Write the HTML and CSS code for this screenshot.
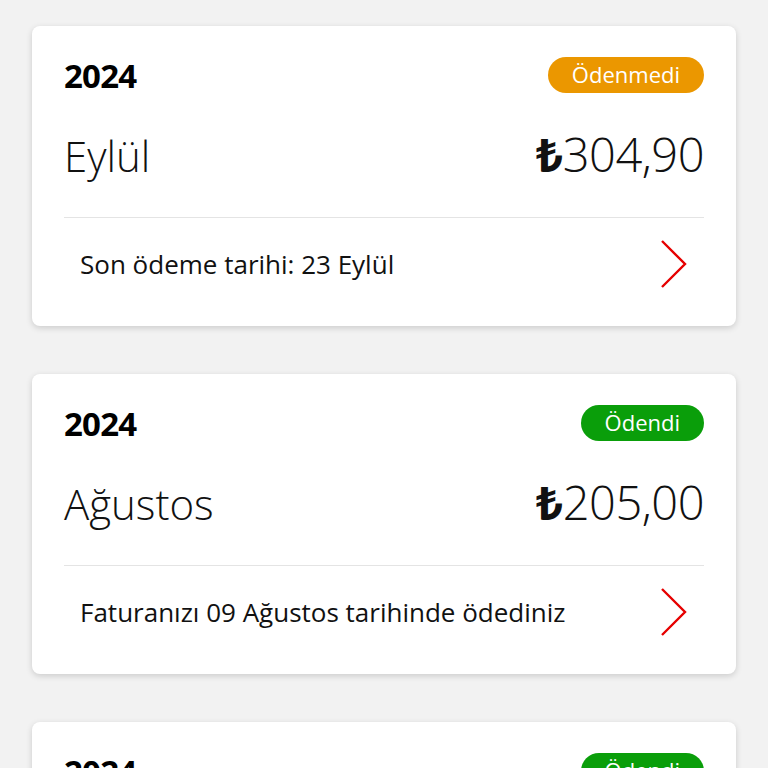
FILE: index.html
```html
<!DOCTYPE html>
<html lang="tr">
<head>
    <meta charset="UTF-8">
    <meta name="viewport" content="width=device-width, initial-scale=1.0">
    <title>Faturalarım</title>
    <link rel="stylesheet" href="styles.css">
</head>
<body>
    <div class="bill-list">
        <div class="card">
            <div class="card-top">
                <span class="year">2024</span>
                <span class="badge unpaid">Ödenmedi</span>
            </div>
            <div class="card-main">
                <span class="month">Eylül</span>
                <span class="amount"><b>₺</b>304,90</span>
            </div>
            <div class="card-footer">
                <span class="note">Son ödeme tarihi: 23 Eylül</span>
                <svg class="chevron" width="28" height="48" viewBox="0 0 28 48"><polyline points="2,1 25,24 2,47" fill="none" stroke="#e60000" stroke-width="2.4"/></svg>
            </div>
        </div>
        <div class="card">
            <div class="card-top">
                <span class="year">2024</span>
                <span class="badge paid">Ödendi</span>
            </div>
            <div class="card-main">
                <span class="month">Ağustos</span>
                <span class="amount"><b>₺</b>205,00</span>
            </div>
            <div class="card-footer">
                <span class="note">Faturanızı 09 Ağustos tarihinde ödediniz</span>
                <svg class="chevron" width="28" height="48" viewBox="0 0 28 48"><polyline points="2,1 25,24 2,47" fill="none" stroke="#e60000" stroke-width="2.4"/></svg>
            </div>
        </div>
        <div class="card">
            <div class="card-top">
                <span class="year">2024</span>
                <span class="badge paid">Ödendi</span>
            </div>
            <div class="card-main">
                <span class="month">Temmuz</span>
                <span class="amount"><b>₺</b>205,00</span>
            </div>
            <div class="card-footer">
                <span class="note">Faturanızı 10 Temmuz tarihinde ödediniz</span>
                <svg class="chevron" width="28" height="48" viewBox="0 0 28 48"><polyline points="2,1 25,24 2,47" fill="none" stroke="#e60000" stroke-width="2.4"/></svg>
            </div>
        </div>
    </div>
</body>
</html>
```

FILE: styles.css
```css
body {
    font-family: "Open Sans", "Noto Sans", sans-serif;
    background-color: #f2f2f2;
    color: #111;
    margin: 0;
}

.bill-list {
    padding: 26px 32px 0;
    display: flex;
    flex-direction: column;
    gap: 48px;
}

.card {
    background: white;
    border-radius: 8px;
    box-shadow: 0 2px 6px rgba(0,0,0,0.16);
    padding: 31px 32px 0;
    height: 300px;
    box-sizing: border-box;
}

.card-top {
    display: flex;
    justify-content: space-between;
    align-items: center;
    height: 36px;
}

.year {
    font-size: 33px;
    font-weight: 700;
    letter-spacing: -0.8px;
    color: #000;
}

.badge {
    height: 36px;
    line-height: 35px;
    padding: 0 24px;
    border-radius: 18px;
    color: #fff;
    font-size: 22px;
}

.unpaid {
    background-color: #eb9700;
}

.paid {
    background-color: #0a9e0a;
}

.card-main {
    display: flex;
    justify-content: space-between;
    align-items: baseline;
    height: 125px;
    border-bottom: 1px solid #e4e4e4;
    box-sizing: border-box;
}

.month {
    font-size: 42px;
    font-weight: 300;
    line-height: 1;
    margin-top: 42px;
}

.amount {
    font-size: 47px;
    font-weight: 300;
    line-height: 1;
    letter-spacing: -0.5px;
}

.amount b {
    font-weight: 700;
}

.card-footer {
    display: flex;
    justify-content: space-between;
    align-items: center;
    height: 92px;
    padding: 0 16px;
}

.note {
    font-size: 26px;
}
```
